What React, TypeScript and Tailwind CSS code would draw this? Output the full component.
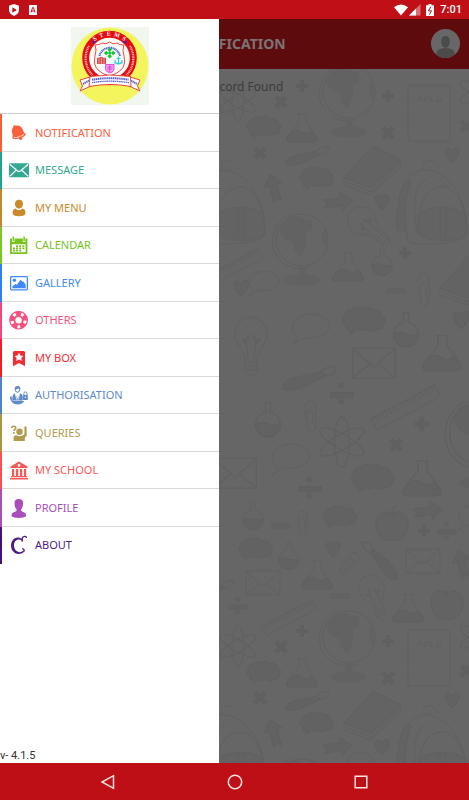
import type { ReactNode } from 'react'

type MenuItem = {
  label: string
  bar: string
  text: string
  icon: ReactNode
}

const menuItems: MenuItem[] = [
  {
    label: 'NOTIFICATION',
    bar: 'border-l-[#ff5a36]',
    text: 'text-[#f9603c]',
    icon: (
      <>
        <path d="M4.200 3.200c.5-1 1.600-1.200 2.300-.5 3.600-.8 6.600 1.100 7.500 4.300.6 2 1.200 3 2.700 4.200L3.600 15.600c.4-2 .1-3.300-.4-5.200-.7-2.600-.3-4.800 1-6.200z" />
        <path d="M2.800 14.800 16.800 10.200c.7 1.600-1.300 3.400-5.200 4.900-4 1.500-8 1.500-8.800-.3z" />
        <path d="M4.600 14.700c3 .3 8-1.400 10.800-3.500" fill="none" stroke="#fff" strokeWidth=".8" />
        <circle cx="11.600" cy="15.200" r="1.700" />
      </>
    ),
  },
  {
    label: 'MESSAGE',
    bar: 'border-l-[#1fa38c]',
    text: 'text-[#33a792]',
    icon: (
      <>
        <rect x="0" y="3.300" width="20" height="14" rx="1" />
        <path
          d="M.8 4.300 8.500 11q1.500 1.200 3 0l7.700-6.700M.8 16.200l6.500-6.100M19.200 16.200l-6.500-6.100"
          fill="none"
          stroke="#fff"
          strokeWidth="1.200"
        />
      </>
    ),
  },
  {
    label: 'MY MENU',
    bar: 'border-l-[#c4882a]',
    text: 'text-[#c88a2c]',
    icon: (
      <>
        <path d="M10 1.800c2.500 0 4 1.500 4 3.900 0 2.500-1.700 4.900-4 4.900S6 8.200 6 5.700c0-2.400 1.500-3.900 4-3.900z" />
        <path d="M6.600 10.400c2 2 4.800 2 6.800 0 2.200.6 3 1.800 3 4v1.400c-1 1.800-3.200 2.500-6.400 2.500s-5.400-.7-6.400-2.500v-1.400c0-2.200.8-3.400 3-4z" />
      </>
    ),
  },
  {
    label: 'CALENDAR',
    bar: 'border-l-[#78c81e]',
    text: 'text-[#76c41c]',
    icon: (
      <>
        <path
          fillRule="evenodd"
          d="M1 3.500h2v2.700c0 1 2.600 1 2.600 0V3.500h8.200v2.700c0 1 2.600 1 2.600 0V3.500h2V18q0 1-1 1H2q-1 0-1-1zM2.800 9.200v8h13.800v-8z"
        />
        <path d="M3.600 1.500h1.500V6H3.600zM14.400 1.500h1.500V6h-1.500z" />
        <path d="M7 10.200h2v1.700H7zM10.200 10.200h2v1.700h-2zM13.400 10.200h2v1.700h-2zM4 12.500h2v1.700H4zM7 12.500h2v1.700H7zM10.200 12.500h2v1.700h-2zM13.400 12.500h2v1.700h-2zM4 14.800h2v1.700H4zM7 14.800h2v1.700H7zM10.200 14.800h2v1.700h-2z" />
      </>
    ),
  },
  {
    label: 'GALLERY',
    bar: 'border-l-[#2f80f5]',
    text: 'text-[#4289f5]',
    icon: (
      <>
        <rect x="1.600" y="3.600" width="16.800" height="13.200" rx=".8" fill="none" stroke="currentColor" strokeWidth="1.300" />
        <circle cx="5.400" cy="7.300" r="1.700" />
        <path d="M3.400 15.200v-2l3-2.200 1.500.8 3.600-5 2 2 1-.4 2.200 3.400v3.400z" />
      </>
    ),
  },
  {
    label: 'OTHERS',
    bar: 'border-l-[#f5487a]',
    text: 'text-[#f5507f]',
    icon: (
      <>
        <circle cx="9.600" cy="10.200" r="6.300" fill="none" stroke="currentColor" strokeWidth="6.200" />
        <circle
          cx="9.600"
          cy="10.200"
          r="6.600"
          fill="none"
          stroke="#fff"
          strokeWidth="3"
          pathLength="50"
          strokeDasharray="3.500 6.500"
          strokeDashoffset="-.5"
        />
      </>
    ),
  },
  {
    label: 'MY BOX',
    bar: 'border-l-[#f21d22]',
    text: 'text-[#f22c31]',
    icon: (
      <>
        <path d="M4 4.500Q4 3 5.500 3h9Q16 3 16 4.500v13.800l-6-3.300-6 3.300z" />
        <path d="m10 4.700 1.400 2.700 3 .5-2.100 2.100.5 3-2.800-1.400L7.200 13l.5-3-2.100-2.100 3-.5z" fill="#fff" />
      </>
    ),
  },
  {
    label: 'AUTHORISATION',
    bar: 'border-l-[#4f83cc]',
    text: 'text-[#6089c8]',
    icon: (
      <>
        <path d="M5.600 3.600C5.600 1.900 6.800 1 8.500 1s2.900.9 2.900 2.600c0 2.200-1.200 4.200-2.900 4.200S5.600 5.800 5.600 3.600z" />
        <path d="M6.800 4.300c1.500 0 2.400-.4 3.300-1 .4 2-.5 3.400-1.600 3.400S6.800 5.900 6.800 4.300z" fill="#fff" />
        <path d="M6 8.200l2.500 5.300L11 8.200c1.600.5 2.400 1.400 2.700 3v4.400H4.300c-1.600 0-1.400-6.600 1.700-7.400z" />
        <path d="M6.200 8.600l1.700 6M10.800 8.600l-1.700 6" fill="none" stroke="#fff" strokeWidth=".8" />
        <path d="M1 11.500c-.3 4.500 3.500 8 7.600 8 3 0 5.400-1.200 6.700-3.500H5.500c-2.500 0-3-1.500-2.600-4.500z" />
        <rect x="14" y="10" width="4.800" height="5" rx=".6" />
        <path d="M14.900 10V8.400c0-2 3-2 3 0V10" fill="none" stroke="currentColor" strokeWidth="1" />
        <circle cx="16.400" cy="12.300" r=".7" fill="#fff" />
      </>
    ),
  },
  {
    label: 'QUERIES',
    bar: 'border-l-[#ac9444]',
    text: 'text-[#b29a4c]',
    icon: (
      <>
        <path d="M2.800 5c0-2.100 4-2.400 4-.2 0 1.700-1.900 1.500-1.900 3.200" fill="none" stroke="currentColor" strokeWidth="1.600" />
        <circle cx="4.900" cy="9.900" r="1" />
        <circle cx="10.500" cy="8.700" r="3.200" />
        <path d="M15.400 3.800q1-1 2.100 0l.3 7.800c0 2-1.600 2.500-2 3.300V18H4.600v-3.200c0-1.700 1-2.600 2.800-2.600 1.900 1.400 4.300 1.400 6.200 0 1.300-.2 1.800-.8 1.800-2z" />
      </>
    ),
  },
  {
    label: 'MY SCHOOL',
    bar: 'border-l-[#ff4f4f]',
    text: 'text-[#fb5757]',
    icon: (
      <>
        <path fillRule="evenodd" d="m10 1.500 8.500 4.900V8h-17V6.400zm0 2.500a1.400 1.400 0 1 0 0 2.800A1.400 1.400 0 0 0 10 4z" />
        <path d="M3 9h2.200v7.200H3zM7 9h2.200v7.200H7zM11 9h2.200v7.200H11zM15 9h2.200v7.200H15zM2 16h16v1.300H2zM1 18h18v1.600H1z" />
      </>
    ),
  },
  {
    label: 'PROFILE',
    bar: 'border-l-[#aa4cba]',
    text: 'text-[#a84fba]',
    icon: (
      <path d="M9.800 1c3 0 4.500 1.700 4.300 4.600-.1 2.800-.8 4.500-2 5.600v1.600c.5 1 4.900 1.400 4.900 4.300v1.200c-1.500 1.300-4 1.700-7.200 1.700s-5.700-.4-7.200-1.700v-1.200c0-2.900 4.400-3.300 4.900-4.300v-1.600c-1.200-1.100-1.900-2.800-2-5.600C5.300 2.700 6.800 1 9.800 1z" />
    ),
  },
  {
    label: 'ABOUT',
    bar: 'border-l-[#46107c]',
    text: 'text-[#4c1c84]',
    icon: (
      <>
        <path d="M13.500 4C8 0 2 4.100 2 10.500c0 7.300 8 11.500 13.200 6l-.8-.9c-4.100 3.700-9.400.3-9.400-5.300 0-5 4.300-7.500 8.500-4.400z" />
        <path d="M13.200 6.800V3.400c.6-2.200 4.300-3 4.300-.3" fill="none" stroke="currentColor" strokeWidth="1.300" />
        <path d="M13.200 13.700c2 .4 2.500 1.700 1.500 3" fill="none" stroke="currentColor" strokeWidth="1.300" />
      </>
    ),
  },
]

type Place = [shape: string, x: number, y: number, scale?: number, rotate?: number]

// the wallpaper tile is 545px tall, these shapes show up again below it
const topDoodles: Place[] = [
  ['atom', 238, 101], ['cloud', 264, 127], ['flask', 302, 128], ['globe', 349, 92],
  ['plus', 302, 86], ['plus', 388, 96], ['plus', 281, 102, 1.2, 45], ['plus', 388, 133, 1.2, 45],
  ['notes', 429, 113], ['atom', 478, 92], ['plus', 466, 126, 1.2, 45], ['brush', 307, 156],
  ['plus', 260, 153, 1.2, 45], ['cloud', 317, 178], ['book', 373, 170], ['heart', 452, 155],
  ['backpack', 230, 203], ['backpack', 432, 203], ['arrow', 274, 188, 1, -105],
  ['arrow', 338, 202, 1, -8], ['heart', 382, 202], ['globe', 302, 240], ['bulb', 370, 228, 0.85, -50],
]

const middleDoodles: Place[] = [
  ['ruler', 236, 267, 0.8, -28], ['flask', 348, 267], ['roundFlask', 382, 262], ['plus', 405, 253],
  ['heart', 241, 288], ['speech', 264, 281, 0.8], ['minus', 396, 291], ['clip', 423, 289],
  ['book', 469, 280], ['bulb', 251, 347], ['speech', 311, 326], ['cloud', 364, 320, 1.25],
  ['roundFlask', 406, 330, 1.25], ['heart', 461, 320, 1.1], ['flask', 442, 353, 1.25],
  ['envelope', 374, 363, 1.25], ['brush', 309, 378, 1.25], ['divide', 342, 395, 1.25],
  ['ruler', 406, 408, 1, -28], ['plus', 422, 424, 1.2], ['roundFlask', 268, 420, 1.25],
  ['clip', 310, 416], ['atom', 342, 442, 1.25], ['plus', 396, 445, 1.2, 45], ['speech', 291, 456],
  ['envelope', 235, 473, 1.25], ['divide', 310, 489, 1.25], ['cloud', 373, 478, 1.25],
  ['flask', 422, 478, 1.25], ['globe', 482, 433, 1.25], ['roundFlask', 253, 516], ['minus', 281, 526],
  ['clip', 302, 523, 0.8], ['cloud', 340, 517], ['apple', 392, 525], ['arrow', 428, 511, 1, -8],
  ['plus', 424, 531], ['divide', 447, 532], ['speech', 474, 515, 0.8], ['cloud', 256, 549],
  ['roundFlask', 289, 556], ['heart', 333, 549], ['clip', 349, 562, 0.8, 45],
  ['brush', 380, 561, 1.1, -112], ['flask', 317, 575], ['envelope', 263, 583], ['envelope', 423, 561],
  ['arrow', 462, 564, 1, -105], ['bulb', 375, 598, 0.8, -20], ['flask', 408, 608], ['apple', 447, 604],
  ['minus', 340, 596], ['divide', 238, 607], ['brush', 212, 590], ['ruler', 289, 618, 0.8, -28],
]

function Doodle({ place }: { place: Place }) {
  const [shape, x, y, scale = 1, rotate = 0] = place
  return <use href={`#${shape}`} transform={`translate(${x} ${y}) rotate(${rotate}) scale(${scale})`} />
}

function Wallpaper() {
  return (
    <svg
      className="absolute right-0 top-0 h-[694px] w-[250px]"
      viewBox="219 69 250 694"
      fill="none"
      stroke="#606060"
      strokeWidth="1"
      aria-hidden="true"
    >
      <defs>
        <g id="atom">
          <ellipse rx="6" ry="20" />
          <ellipse rx="6" ry="20" transform="rotate(60)" />
          <ellipse rx="6" ry="20" transform="rotate(-60)" />
        </g>
        <path id="cloud" fill="#626262" d="M-9 9c-5 0-6-3-5-5-4-2-4-6-1-7-1-4 3-6 5-5 2-4 7-3 8-1 3-3 7-2 8 1 4-2 8 1 7 4 4 1 5 5 2 7 1 4-3 5-5 4-3 3-7 2-8 0-3 2-6 2-7 0l-7 5z" />
        <g id="flask">
          <path d="M-5-14H5M-3-14v8L-15 9q-1 5 3 5h24q4 0 3-5L4-6v-8" />
          <path fill="#626262" d="M-10 4q5-4 10 0t9-1l6 7q0 4-3 4h-24q-4 0-3-4z" />
        </g>
        <g id="roundFlask">
          <path d="M-2-6v-8h4v8a10 10 0 1 1-4 0z" />
          <path fill="#626262" d="M-10 3q5-2 10 0t10 0c0 6-4 10-10 10S-10 9-10 3z" />
        </g>
        <g id="globe">
          <circle r="26" />
          <path d="M-12-26c-22 10-24 42-2 52q12 5 22 1" />
          <path fill="#626262" stroke="#626262" d="M-22-10q4-12 16-14l8 3 8 2-1 9-6 2 1 10-5 14-6-5-2-9-7-3-5-6zM24-12q-7 8 0 20zM-3 27h6v9h-6zM-18 40q3-5 18-5t18 5q-3 5-18 5t-18-5z" />
        </g>
        <path id="plus" fill="#606060" stroke="none" d="M-2-6h4v4h4v4h-4v4h-4v-4h-4v-4h4z" />
        <path id="minus" fill="#626262" stroke="none" d="M-10-3h20v6h-20z" />
        <path id="divide" fill="#616161" d="M-9-2H9v4H-9zM-2-6a2 2 0 1 1 3 0zM-2 7a2 2 0 1 1 3 0z" />
        <g id="notes">
          <rect x="-21" y="-28" width="42" height="56" rx="2" />
          <path d="M-21-22v46" strokeWidth="2" strokeDasharray="1 2" />
          <path d="M-10-11l1-6 4 6 2-6M-2-12a2 2 0 1 1 1 0M3-17l-1 6 3-1M6-12l4-3-3 4 3 0M12-15l-1 4h-1" />
        </g>
        <g id="brush">
          <path fill="#626262" d="M-21 8q0-6 8-8L10-5l3 3Q-10 12-20 9z" />
          <path d="M10-5q3-5 12-4-2 8-9 7z" />
        </g>
        <g id="book">
          <path fill="#636363" d="M-29 8 0-24 28-10-2 18z" />
          <path d="M-29 8v7L-2 25 28-3v-7M-27 12-1 22 27-7" />
        </g>
        <path id="heart" fill="#626262" d="M0 8Q-8 0-7-5-3-10 0-4 4-10 7-6 9 0 0 8z" />
        <g id="backpack">
          <path d="M-8-33q-2-12 8-9l8 8M-24 38c-6-30-9-72 17-71 26 0 43 34 42 63-1 12-54 14-59 8zM-15 30c-5-24-3-50 10-54" />
          <path fill="#636363" d="M-13 10q24-12 46 0 3 20-1 24-20 7-42 0-7-2-3-24zM-27-22q-10 20-8 48l10 4q-5-30 4-52z" />
          <path d="M-12 8q4-22 20-24t24 24M8 5v30M14 5v30" />
        </g>
        <path id="arrow" fill="#626262" d="M-14-4H3v-5L14 0 3 9V4h-17l3-4z" />
        <g id="bulb">
          <path d="M-6 13c0-12-10-14-10-27a16 16 0 0 1 32 0c0 13-10 15-10 27v12q-6 7-12 0zM-6 15H6M-6 19H6M-6 23H6M-3 13l-2-22M3 13l2-22" />
          <path strokeWidth="2" d="M-9-8l4 4M9-8 5-4M-3-12v5M3-12v5" />
        </g>
        <path id="speech" d="M-14 10C-22 6-21-11 0-12c23 0 25 23 1 24l-8 0-12 7q6-5 5-9z" />
        <path id="clip" d="M-5 3v-12q1-7 7-6 4 1 4 6V8q0 8-4 8t-5-8V-3q3-5 6 0V9" />
        <g id="envelope">
          <path d="M-17-12h34v24h-34zM-17-12-2 2q2 2 4 0l15-14M-17 12-4 1M17 12 4 1" />
        </g>
        <g id="ruler">
          <path d="M-36-7h72V6h-72z" />
          <path strokeWidth="5" strokeDasharray="1 3" d="M-32-4h66" />
        </g>
        <g id="apple">
          <path fill="#636363" d="M0-11c9-6 17 1 16 12-1 10-9 16-16 14-7 2-15-4-16-14-1-11 7-18 16-12z" />
          <path d="M0-10q0-5 3-9M-4-10q4 3 9 0" />
        </g>
      </defs>
      {topDoodles.map((place, i) => (
        <Doodle key={i} place={place} />
      ))}
      {middleDoodles.map((place, i) => (
        <Doodle key={i} place={place} />
      ))}
      <g transform="translate(0 545)">
        {topDoodles.map((place, i) => (
          <Doodle key={i} place={place} />
        ))}
      </g>
    </svg>
  )
}

function SchoolLogo() {
  return (
    <svg className="size-[78px]" viewBox="0 0 78 78" role="img" aria-label="School logo">
      <rect width="78" height="78" fill="#f1f6ef" />
      <circle cx="39" cy="39" r="38.500" fill="#f4f45c" />
      <circle cx="38.500" cy="31" r="23.800" fill="#fdfdf5" stroke="#e60d12" strokeWidth="7" />
      <defs>
        <path id="logoTop" d="M16.500 25a23 23 0 0 1 44 0" />
      </defs>
      <text fill="#fff" fontSize="6" fontWeight="700" fontFamily="Liberation Serif, serif" textAnchor="middle">
        <textPath href="#logoTop" startOffset="50%">{'S\u00a0\u00a0T\u00a0\u00a0E\u00a0\u00a0M\u00a0\u00a0S'}</textPath>
      </text>
      <g fill="none" stroke="#fff" strokeWidth="2.200" strokeDasharray="1 .7" opacity=".75">
        <path d="M18 19a24 24 0 0 0 3.500 29M59 19a24 24 0 0 1-3.500 29" />
      </g>
      <path d="M21.500 13.500l3.500 1-2.500 2.500zM52 14.500l3.500-1-1 3.500z" fill="#2b2ad0" />
      <path
        d="M24 18q5 0 7-2 4 2 7.500-1 3.500 3 7.500 1 2 2 7 2-2 5 0 11 2 9-3 14-4 4-11.500 6-7.500-2-11.500-6-5-5-3-14 2-6 0-11z"
        fill="#f8fbf8"
        stroke="#e33"
        strokeWidth=".9"
      />
      <path d="M28.500 29a10.500 10.500 0 0 1 20.500 0" fill="none" stroke="#5560d8" strokeWidth="2" strokeDasharray="1.200 .5" />
      <g fill="#10c832">
        <path d="m38.700 20.500 2.300 2.300-2.300 2.300-2.300-2.300zM38.700 27l2.300 2.300-2.300 2.300-2.300-2.300zM35.200 23.700l2.300 2.300-2.300 2.300-2.300-2.300zM42.200 23.700l2.300 2.300-2.300 2.300-2.300-2.300z" />
        <circle cx="38.700" cy="26" r="1.500" />
      </g>
      <path d="M26 31l4-1 5 1v6h-9z" fill="#d94a4a" />
      <path d="M28 31v6M30.500 31v6M33 31v6" stroke="#fbdada" strokeWidth=".5" />
      <path d="M47.500 29.500v7M44 33q0 4 3.500 4t3.500-4M43 36h9M45.500 31.500h4" fill="none" stroke="#36cfe0" strokeWidth="1.200" />
      <path d="M34.500 37.500h8.500v5q0 2-4 3.500-4.500-1.500-4.500-3.500z" fill="#f5a0ef" stroke="#e23ee0" strokeWidth=".9" />
      <path d="M36 40h5.500M36 42h5.500M38.700 38v7" stroke="#c833c8" strokeWidth=".7" />
      <path d="M9 53l10-3 1 9-11 5 2.500-5zM69 53l-10-3-1 9 11 5-2.500-5z" fill="#fff" stroke="#e8352c" strokeWidth=".9" />
      <path d="M19 49.500q20-3 40.500 0l.5 10q-20-4-42 0z" fill="#fff" stroke="#e8352c" strokeWidth=".9" />
      <g fill="none" stroke="#5a5fcf" strokeDasharray="1.400 .5">
        <path d="M21 52.700q18-3 36.500 0" strokeWidth="2" />
        <path d="M21 55.700q18-3 37 0" strokeWidth="1.300" />
        <path d="M12 57l6-3.500M66 57l-6-3.500" strokeWidth="2" />
      </g>
    </svg>
  )
}

function StatusBar() {
  return (
    <header className="flex h-[19px] shrink-0 items-center bg-[#c00f16] pl-2 pr-[7px] text-white">
      <svg className="h-3 w-3" viewBox="0 0 12 12" aria-hidden="true">
        <path d="M6 0l5 1.800v4Q11 10 6 12 1 10 1 5.800v-4z" fill="#fff" />
        <path d="M4.300 3.300v5.400L8.800 6z" fill="#c00f16" />
      </svg>
      <svg className="ml-2 h-3 w-[10px]" viewBox="0 0 10 12" aria-hidden="true">
        <rect x="1" y="1" width="8" height="10" rx=".5" fill="#fff" />
        <path d="M3 8.500 4.600 3.500h.8L7 8.500M3.500 7h3" fill="none" stroke="#c00f16" strokeWidth="1" />
      </svg>
      <svg className="ml-auto h-3 w-[27px]" viewBox="0 0 27 12" aria-hidden="true">
        <path d="M0 3.300Q7-2.300 14 3.300L7 11.500z" fill="#fff" />
        <path d="M26.500 0v11.500H15z" fill="#fff" opacity=".4" />
        <path d="M22 4.500v7h-7z" fill="#fff" />
      </svg>
      <svg className="ml-[5px] h-3 w-2" viewBox="0 0 8 12" aria-hidden="true">
        <path d="M2.500 0h3v1.200H8V12H0V1.200h2.500z" fill="#fff" />
        <path d="M4.800 2.800 2.500 6.800h3L3.500 10.500" fill="none" stroke="#c00f16" strokeWidth="1" />
      </svg>
      <time className="ml-[6px] font-[Roboto,sans-serif] text-[11px] font-medium leading-4">7:01</time>
    </header>
  )
}

function Drawer() {
  return (
    <aside className="absolute inset-y-0 left-0 flex w-[219px] flex-col bg-white">
      <div className="flex h-[95px] shrink-0 justify-center border-b border-[#cfcfcf] pt-2">
        <SchoolLogo />
      </div>
      <nav className="flex h-[450px] shrink-0 flex-col">
        {menuItems.map((item) => (
          <a
            key={item.label}
            href="#"
            className={`flex flex-1 items-center gap-[6px] border-l-2 pl-[7px] shadow-[inset_0_-1px_0_#dadada] last:shadow-none ${item.bar} ${item.text}`}
          >
            <svg className="size-5" viewBox="0 0 20 20" fill="currentColor" aria-hidden="true">
              {item.icon}
            </svg>
            <span className="text-[11px] leading-4">{item.label}</span>
          </a>
        ))}
      </nav>
      <p className="mt-auto font-[Roboto,sans-serif] text-[11px] leading-[14px] text-[#333]">v- 4.1.5</p>
    </aside>
  )
}

export default function App() {
  return (
    <div className="flex min-h-screen flex-col bg-[#666] font-['Noto_Sans',sans-serif]">
      <StatusBar />
      <div className="relative flex flex-1 flex-col">
        <div className="relative flex h-[50px] items-center justify-center bg-[#5e0b0e]">
          <h1 className="text-[14px] font-bold leading-5 text-[#7b7474]">NOTIFICATION</h1>
          <button type="button" aria-label="Account" className="absolute right-[9px] top-[10px] size-[29px] rounded-full">
            <svg viewBox="0 0 29 29" aria-hidden="true">
              <circle cx="14.500" cy="14.500" r="14.500" fill="#676767" />
              <path d="M14.500 7c3 0 4.300 2 4.300 5 0 4-1.800 6.800-4.300 6.800S10.200 16 10.200 12c0-3 1.300-5 4.300-5z" fill="#4b4b4b" />
              <path d="M5 25q1-6 9.500-6T24 25q-4 4-9.500 4T5 25z" fill="#4b4b4b" />
            </svg>
          </button>
        </div>
        <main className="relative flex-1 overflow-hidden">
          <Wallpaper />
          <p className="relative pt-2 text-center text-[12px] leading-5 text-[#3c3c3c]">No Record Found</p>
        </main>
        <Drawer />
      </div>
      <footer className="flex h-[37px] shrink-0 justify-center bg-[#bf0f16]">
        <div className="grid w-[81%] grid-cols-3 place-items-center">
          <button type="button" aria-label="Back">
            <svg className="size-4" viewBox="0 0 16 16" fill="none" stroke="#fbe3e3" strokeWidth="1.500" aria-hidden="true">
              <path d="M13.500 1.700v12.600L2 8z" />
            </svg>
          </button>
          <button type="button" aria-label="Home">
            <svg className="size-4" viewBox="0 0 16 16" fill="none" stroke="#fbe3e3" strokeWidth="1.500" aria-hidden="true">
              <circle cx="8" cy="8" r="6.700" />
            </svg>
          </button>
          <button type="button" aria-label="Recent apps">
            <svg className="size-4" viewBox="0 0 16 16" fill="none" stroke="#fbe3e3" strokeWidth="1.500" aria-hidden="true">
              <path d="M2.200 2.200h11.600v11.600H2.200z" />
            </svg>
          </button>
        </div>
      </footer>
    </div>
  )
}
